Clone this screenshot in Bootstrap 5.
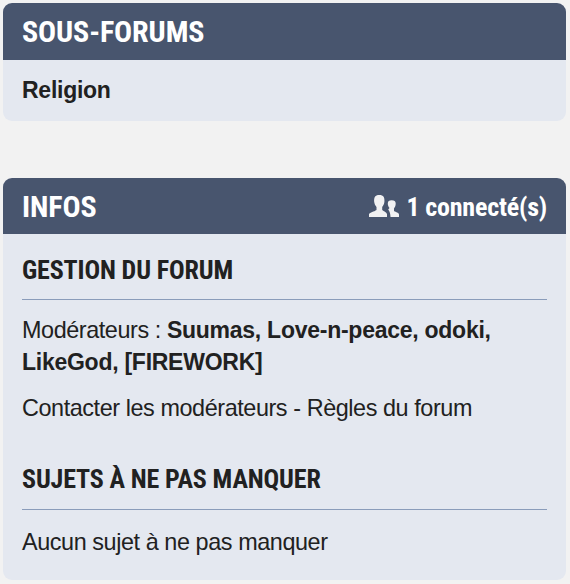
<!DOCTYPE html>
<html lang="fr">
<head>
<meta charset="utf-8">
<meta name="viewport" content="width=device-width, initial-scale=1">
<title>Forum</title>
<link rel="stylesheet" href="https://cdn.jsdelivr.net/npm/bootstrap@5.3.0/dist/css/bootstrap.min.css">
<style>
body{background:#f2f2f2;color:#212121;font-family:"Liberation Sans",Arial,sans-serif;font-size:23.4px;letter-spacing:-.42px;line-height:32px;padding:3px 4px 4px 3px;overflow:hidden}
a{color:inherit;text-decoration:none}
.name{font-size:23px;font-weight:700;letter-spacing:-.26px}
.panel{background:#e4e8f0;border:0;border-radius:9px;overflow:hidden;color:inherit}
.panel-top{background:#48556e;color:#fff;height:56px;padding:0 19px;border:0}
.panel-main{padding:0 19px}
.cond{font-family:"Roboto Condensed",Roboto,sans-serif;font-stretch:75%;font-weight:700;white-space:nowrap;margin:0;letter-spacing:0}
.t-main{font-size:30px;line-height:40px;letter-spacing:-.1px;padding-top:1px}
.t-sub{font-size:26px;line-height:36px;letter-spacing:-.14px}
.count{font-size:26px;line-height:36px;letter-spacing:-.2px;padding-top:1px;margin-left:8px}
.rule{border-bottom:1px solid #8a9cba}
.sub-top{height:57px}
.sub-main{height:61px;padding-top:14px}
.infos{margin-top:57px;height:402px}
.first-title{padding-top:18px;height:65px}
.next-title{margin-top:37px;height:48px}
.mods{margin:14px 0}
.last{margin:16px 0 0}
</style>
</head>
<body>
<section class="card panel">
  <div class="card-header panel-top sub-top d-flex align-items-center"><h2 class="cond t-main">SOUS-FORUMS</h2></div>
  <div class="panel-main sub-main"><a href="#" class="name">Religion</a></div>
</section>
<section class="card panel infos">
  <div class="card-header panel-top d-flex align-items-center justify-content-between">
    <h2 class="cond t-main">INFOS</h2>
    <div class="d-flex align-items-center">
      <svg width="30" height="22" viewBox="0 0 30 22" fill="#f1f1f2"><path d="M0 22v-3c1-1.500 5-2.300 7.500-4v-3C6.200 10.500 5.600 9 5.200 7 4.800 2.500 6 0 10.300 0s5.500 2.500 5.100 7c-.4 2-1 3.500-2.200 5v3c1.800 1.400 4 2 4.800 4v3z"/><path d="M21.500 22c-.1-3.500-.8-5.500-2.300-7.500l1.300-1.500c-1.200-1.400-1.700-2.800-1.700-4.500 0-2 1.200-3.200 3.900-3.200s4 1.200 4 3.200c0 2-.6 3.500-1.700 5v2.500c2 1.200 5 1.700 5 3.500V22z"/></svg>
      <span class="cond count">1 connecté(s)</span>
    </div>
  </div>
  <div class="panel-main">
    <h3 class="cond t-sub first-title">GESTION DU FORUM</h3>
    <div class="rule"></div>
    <p class="mods">Modérateurs : <b class="name">Suumas, Love-n-peace, odoki,<br>LikeGod, [FIREWORK]</b></p>
    <p class="mb-0"><a href="#">Contacter les modérateurs</a> - <a href="#">Règles du forum</a></p>
    <h3 class="cond t-sub next-title">SUJETS À NE PAS MANQUER</h3>
    <div class="rule"></div>
    <p class="last">Aucun sujet à ne pas manquer</p>
  </div>
</section>
<script src="https://cdn.jsdelivr.net/npm/bootstrap@5.3.0/dist/js/bootstrap.bundle.min.js"></script>
</body>
</html>
